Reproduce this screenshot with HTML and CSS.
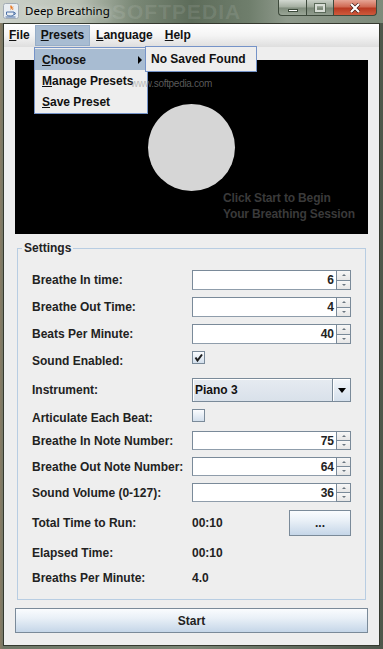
FILE: index.html
```html
<!DOCTYPE html>
<html lang="en">
<head>
    <meta charset="UTF-8">
    <meta name="viewport" content="width=device-width, initial-scale=1.0">
    <title>Deep Breathing</title>
    <link rel="stylesheet" href="styles.css">
</head>
<body>
    <div class="window">
        <div class="titlebar">
            <svg class="app-icon" width="16" height="16" viewBox="0 0 16 16">
                <rect x="0.5" y="0.5" width="15" height="15" rx="2" fill="#e9eef3" stroke="#a3acb5"/>
                <path d="M8 2 C6 4 9 5 7 7.5 C9 6 10 4.5 8 2 Z" fill="#e8761e"/>
                <path d="M10 3.5 C9 5 10.5 5.5 9.5 7" stroke="#e8761e" stroke-width="0.9" fill="none"/>
                <path d="M3.5 9 H11 V11 C11 12.5 9.5 13 7.5 13 C5 13 3.5 12.5 3.5 11 Z" fill="none" stroke="#4a6fa5" stroke-width="1"/>
                <path d="M11 9.5 C13 9.5 13 11.5 11 11.5" fill="none" stroke="#4a6fa5" stroke-width="1"/>
                <path d="M2.5 14 H12.5" stroke="#4a6fa5" stroke-width="1"/>
            </svg>
            <span class="title">Deep Breathing</span>
            <span class="wm-big">SOFTPEDIA</span>
            <div class="caption-buttons">
                <span class="cap cap-min"><span class="min-bar"></span></span>
                <span class="cap cap-max"><span class="max-box"></span></span>
                <span class="cap cap-close">
                    <svg width="12" height="10" viewBox="0 0 12 10">
                        <path d="M2 1 L10 9 M10 1 L2 9" stroke="#3a1510" stroke-width="3.4"/>
                        <path d="M2 1 L10 9 M10 1 L2 9" stroke="#ffffff" stroke-width="2.2"/>
                    </svg>
                </span>
            </div>
        </div>

        <div class="client">
            <div class="menubar">
                <span class="menu"><u>F</u>ile</span>
                <span class="menu menu-open"><u>P</u>resets</span>
                <span class="menu"><u>L</u>anguage</span>
                <span class="menu"><u>H</u>elp</span>
            </div>

            <div class="content">
                <div class="canvas">
                    <div class="ball"></div>
                    <p class="hint">Click Start to Begin<br>Your Breathing Session</p>
                </div>

                <fieldset class="settings">
                    <legend>Settings</legend>
                    <div class="rows">
                        <div class="row">
                            <span class="label">Breathe In time:</span>
                            <div class="spinner"><span class="spin-value">6</span><span class="spin-btns"><span class="spin-up"></span><span class="spin-down"></span></span></div>
                        </div>
                        <div class="row">
                            <span class="label">Breathe Out Time:</span>
                            <div class="spinner"><span class="spin-value">4</span><span class="spin-btns"><span class="spin-up"></span><span class="spin-down"></span></span></div>
                        </div>
                        <div class="row">
                            <span class="label">Beats Per Minute:</span>
                            <div class="spinner"><span class="spin-value">40</span><span class="spin-btns"><span class="spin-up"></span><span class="spin-down"></span></span></div>
                        </div>
                        <div class="row row-check">
                            <span class="label">Sound Enabled:</span>
                            <span class="checkbox">
                                <svg width="11" height="11" viewBox="0 0 11 11"><path d="M2.5 5.5 L4.5 8.5 L9 2.5" stroke="#1e1e1e" stroke-width="2" fill="none"/></svg>
                            </span>
                        </div>
                        <div class="row row-combo">
                            <span class="label">Instrument:</span>
                            <div class="combo"><span class="combo-text">Piano 3</span><span class="combo-arrow"></span></div>
                        </div>
                        <div class="row row-check2">
                            <span class="label">Articulate Each Beat:</span>
                            <span class="checkbox"></span>
                        </div>
                        <div class="row row-small first-small">
                            <span class="label">Breathe In Note Number:</span>
                            <div class="spinner"><span class="spin-value">75</span><span class="spin-btns"><span class="spin-up"></span><span class="spin-down"></span></span></div>
                        </div>
                        <div class="row row-small">
                            <span class="label">Breathe Out Note Number:</span>
                            <div class="spinner"><span class="spin-value">64</span><span class="spin-btns"><span class="spin-up"></span><span class="spin-down"></span></span></div>
                        </div>
                        <div class="row row-small">
                            <span class="label">Sound Volume (0-127):</span>
                            <div class="spinner"><span class="spin-value">36</span><span class="spin-btns"><span class="spin-up"></span><span class="spin-down"></span></span></div>
                        </div>
                        <div class="row row-button">
                            <span class="label">Total Time to Run:</span>
                            <div class="value-box"><span>00:10</span><button class="btn btn-more">...</button></div>
                        </div>
                        <div class="row">
                            <span class="label">Elapsed Time:</span>
                            <div class="value-box"><span>00:10</span></div>
                        </div>
                        <div class="row row-last">
                            <span class="label">Breaths Per Minute:</span>
                            <div class="value-box"><span>4.0</span></div>
                        </div>
                    </div>
                </fieldset>

                <button class="btn btn-start">Start</button>
            </div>
        </div>

        <div class="popup presets-menu">
            <div class="popup-item selected"><span><u>C</u>hoose</span><span class="sub-arrow"></span></div>
            <div class="popup-item"><span><u>M</u>anage Presets</span></div>
            <div class="popup-item"><span><u>S</u>ave Preset</span></div>
        </div>
        <div class="popup submenu">
            <div class="popup-item">No Saved Found</div>
        </div>

        <span class="wm-small">www.softpedia.com</span>
    </div>
</body>
</html>
```

FILE: styles.css
```css
* {
    box-sizing: border-box;
}
body {
    margin: 0;
    width: 383px;
    height: 649px;
    overflow: hidden;
    font-family: 'Liberation Sans', Arial, sans-serif;
    font-size: 12px;
    font-weight: bold;
    color: #222;
}
.window {
    position: relative;
    width: 383px;
    height: 649px;
    display: flex;
    flex-direction: column;
    background: linear-gradient(90deg, #8a7b62 0, #6f7767 1%, #7c8676 50%, #4e564b 100%);
}

/* title bar */
.titlebar {
    position: relative;
    height: 23px;
    display: flex;
    align-items: flex-start;
    background: linear-gradient(90deg, #ccd1ca 0%, #b9c1b5 20%, #7a8876 35%, #5d6c5a 50%, #6f7e6c 65%, #8f9a8c 75%, #7d8a7a 100%);
    overflow: hidden;
}
.app-icon {
    margin: 3px 0 0 3px;
    flex: none;
}
.title {
    margin: 3px 0 0 6px;
    font-family: 'Noto Sans', sans-serif;
    font-weight: normal;
    font-size: 11.5px;
    line-height: 15px;
    color: #000;
    text-shadow: 0 0 6px rgba(255, 255, 255, 0.8);
}
.wm-big {
    position: absolute;
    left: 112px;
    top: 0;
    font-size: 21px;
    line-height: 23px;
    letter-spacing: 1px;
    color: rgba(255, 255, 255, 0.10);
    pointer-events: none;
}
.caption-buttons {
    margin-left: auto;
    margin-right: 6px;
    display: flex;
}
.cap {
    height: 16px;
    display: flex;
    align-items: center;
    justify-content: center;
    border: 1px solid #3e4a3c;
    border-top: none;
}
.cap-min {
    width: 28px;
    border-bottom-left-radius: 4px;
    border-right: none;
    background: linear-gradient(#d2d8d0, #a3ad9f 48%, #7f8c7c 52%, #9aa596);
}
.cap-max {
    width: 27px;
    border-right: none;
    background: linear-gradient(#c8cfc6, #9aa596 48%, #7a8777 52%, #919c8e);
}
.cap-close {
    width: 44px;
    border-bottom-right-radius: 4px;
    background: linear-gradient(#e6a595, #d06a54 45%, #b93a22 55%, #cf5a3c);
}
.min-bar {
    width: 10px;
    height: 3px;
    margin-top: 5px;
    background: #fff;
    border: 1px solid #3c4a3a;
}
.max-box {
    width: 10px;
    height: 8px;
    border: 2px solid #d8ddd6;
    outline: 1px solid #5c6a5a;
}

/* client area */
.client {
    flex: 1;
    margin: 0 3px 3px;
    border: 1px solid #35392f;
    background: #eeeeee;
    display: flex;
    flex-direction: column;
}
.menubar {
    height: 23px;
    display: flex;
    align-items: flex-start;
    background: linear-gradient(#ffffff, #f4f4f4 50%, #dedede);
}
.menu {
    margin-top: 1px;
    height: 21px;
    line-height: 19px;
    padding: 0 5px;
    border: 1px solid transparent;
    color: #111;
}
.menu:first-child {
    padding-left: 4px;
    padding-right: 4px;
}
.menu-open {
    background: #a8bcd2;
    border-color: #97aec8;
}
.content {
    flex: 1;
    padding: 13px 11px 12px;
    display: flex;
    flex-direction: column;
}

/* breathing canvas */
.canvas {
    position: relative;
    height: 174px;
    background: #000;
    display: flex;
    align-items: center;
    justify-content: center;
}
.ball {
    width: 87px;
    height: 87px;
    border-radius: 50%;
    background: #d6d6d6;
}
.hint {
    position: absolute;
    left: 208px;
    top: 130px;
    margin: 0;
    line-height: 16px;
    letter-spacing: -0.15px;
    color: #3a3a3a;
}

/* settings panel */
.settings {
    margin: 7px 2px 0;
    padding: 0;
    border: 1px solid #b8cde2;
    min-width: 0;
}
.settings legend {
    margin-left: 4px;
    padding: 0 2px;
    line-height: 14px;
    color: #222;
}
.rows {
    padding: 15px 14px 11px;
}
.row {
    display: flex;
    align-items: center;
    height: 20px;
    margin-top: 7px;
}
.row:first-child {
    margin-top: 0;
}
.label {
    width: 160px;
    flex: none;
    white-space: nowrap;
}
.spinner {
    width: 159px;
    height: 100%;
    display: flex;
}
.spin-value {
    flex: 1;
    background: #fff;
    border: 1px solid #7a8a99;
    border-right: none;
    border-bottom-color: #8f9dab;
    text-align: right;
    padding-right: 2px;
    display: flex;
    align-items: center;
    justify-content: flex-end;
}
.spin-btns {
    width: 15px;
    display: flex;
    flex-direction: column;
}
.spin-up,
.spin-down {
    flex: 1;
    border: 1px solid #7a8a99;
    background: linear-gradient(#f7f7f7, #e6e6e6);
    display: flex;
    align-items: center;
    justify-content: center;
}
.spin-down {
    border-top: none;
}
.spin-up::after {
    content: '';
    border-left: 2.5px solid transparent;
    border-right: 2.5px solid transparent;
    border-bottom: 2.5px solid #6b7680;
}
.spin-down::after {
    content: '';
    border-left: 2.5px solid transparent;
    border-right: 2.5px solid transparent;
    border-top: 2.5px solid #6b7680;
}
.row-check .checkbox {
    align-self: flex-start;
}
.checkbox {
    width: 13px;
    height: 13px;
    border: 1px solid #7a8a99;
    background: linear-gradient(#fbfcfe, #d3dfec);
    display: flex;
    align-items: center;
    justify-content: center;
}
.row-combo {
    height: 24px;
}
.combo {
    width: 159px;
    height: 100%;
    display: flex;
}
.combo-text {
    flex: 1;
    border: 1px solid #7a8a99;
    border-right: none;
    background: linear-gradient(#e6ebf1, #d9e1ea);
    box-shadow: inset 1px 1px 0 #fff;
    padding-left: 2px;
    display: flex;
    align-items: center;
    color: #111;
}
.combo-arrow {
    width: 19px;
    border: 1px solid #7a8a99;
    background: linear-gradient(#f3f6fa, #d5e0ec);
    box-shadow: inset 1px 1px 0 #fff;
    display: flex;
    align-items: center;
    justify-content: center;
}
.combo-arrow::after {
    content: '';
    border-left: 4.5px solid transparent;
    border-right: 4.5px solid transparent;
    border-top: 5px solid #000;
}
.row-check2 {
    height: 18px;
}
.row-check2 .checkbox {
    align-self: flex-start;
}
.row-small {
    height: 19px;
}
.first-small {
    margin-top: 4px;
}
.row-button {
    height: 26px;
    margin-top: 8px;
}
.row-last {
    margin-top: 5px;
}
.value-box {
    width: 159px;
    height: 100%;
    display: flex;
    align-items: center;
    justify-content: space-between;
}

/* buttons */
.btn {
    font-family: 'Liberation Sans', Arial, sans-serif;
    font-size: 12px;
    font-weight: bold;
    color: #222;
    border: 1px solid #7a8a99;
    background: linear-gradient(#fafcfe, #e9f0f7 40%, #c5d6e8);
    padding: 0;
}
.btn-more {
    width: 62px;
    height: 26px;
}
.btn-start {
    margin-top: 8px;
    height: 25px;
    width: 100%;
}

/* open menus */
.popup {
    position: absolute;
    background: #eeeeee;
    border: 1px solid #7593c8;
    padding: 1px 0;
}
.presets-menu {
    left: 34px;
    top: 47px;
    width: 114px;
}
.submenu {
    left: 145px;
    top: 46px;
    width: 112px;
    height: 26px;
    padding: 1px 0;
}
.popup-item {
    height: 21px;
    display: flex;
    align-items: center;
    padding-left: 7px;
    color: #111;
}
.submenu .popup-item {
    padding-left: 5px;
    height: 22px;
}
.popup-item.selected {
    background: #a8bcd2;
}
.sub-arrow {
    margin-left: auto;
    margin-right: 5px;
    border-top: 4px solid transparent;
    border-bottom: 4px solid transparent;
    border-left: 4px solid #000;
}
.wm-small {
    position: absolute;
    left: 131px;
    top: 78px;
    font-size: 10px;
    font-weight: normal;
    letter-spacing: -0.3px;
    color: rgba(150, 150, 150, 0.6);
    pointer-events: none;
}
```
